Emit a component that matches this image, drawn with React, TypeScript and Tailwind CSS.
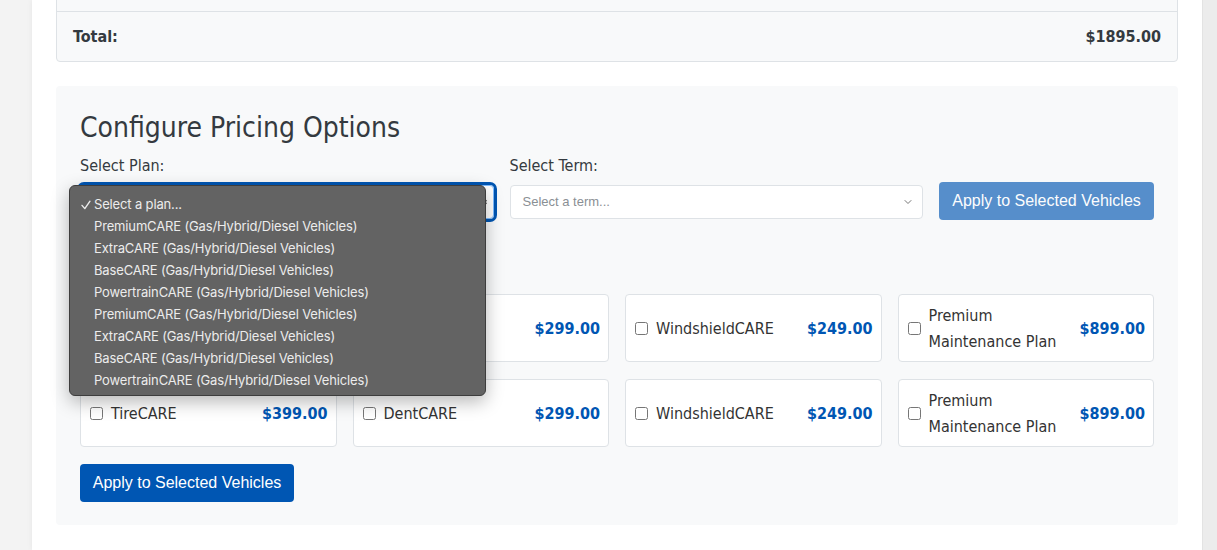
import { ChevronDown, ChevronsUpDown } from 'lucide-react';

const products = [
  { name: 'TireCARE', price: '$399.00' },
  { name: 'DentCARE', price: '$299.00' },
  { name: 'WindshieldCARE', price: '$249.00' },
  { name: 'Premium Maintenance Plan', price: '$899.00' },
];

const planOptions = [
  'PremiumCARE (Gas/Hybrid/Diesel Vehicles)',
  'ExtraCARE (Gas/Hybrid/Diesel Vehicles)',
  'BaseCARE (Gas/Hybrid/Diesel Vehicles)',
  'PowertrainCARE (Gas/Hybrid/Diesel Vehicles)',
  'PremiumCARE (Gas/Hybrid/Diesel Vehicles)',
  'ExtraCARE (Gas/Hybrid/Diesel Vehicles)',
  'BaseCARE (Gas/Hybrid/Diesel Vehicles)',
  'PowertrainCARE (Gas/Hybrid/Diesel Vehicles)',
];

const bodyFont = "font-['DejaVu_Sans_Condensed','Liberation_Sans',sans-serif]";

export default function App() {
  return (
    <div className={`flex h-[550px] overflow-hidden bg-[#f3f3f3] text-[#333] ${bodyFont}`}>
      <div className="w-8 shrink-0" />
      <div className="w-[1170px] shrink-0 bg-white px-6 shadow-[0_0_6px_rgba(0,0,0,0.06)]">
        {/* Summary table (scrolled, only the total row shows) */}
        <div className="-mt-[40px] rounded border border-[#dee2e6] bg-[#f8f9fa]">
          <div className="h-[51px] border-b border-[#dee2e6]" />
          <div className="flex h-[49px] items-center justify-between px-4 text-base font-bold text-[#343a40]">
            <span>Total:</span>
            <span>$1895.00</span>
          </div>
        </div>

        {/* Configure pricing */}
        <div className="mt-6 rounded bg-[#f8f9fa] px-6 pt-[25px] pb-[23px]">
          <h3 className="text-[28px] leading-[1.2] text-[#343a40]">Configure Pricing Options</h3>
          <div className="mt-[9px] flex items-end gap-4">
            <div className="flex-1">
              <label className="block text-base leading-6 text-[#343a40]">Select Plan:</label>
              <div className="relative mt-[7px]">
                <div className="flex h-[34px] items-center justify-between rounded border border-[#80bdff] bg-white pl-3 pr-1 outline-[3px] outline-[#0056b3] outline-offset-0 outline">
                  <span className="font-['Liberation_Sans',sans-serif] text-[13px] text-[#333]">Select a plan...</span>
                  <ChevronsUpDown size={10} className="text-[#222]" strokeWidth={3} />
                </div>
                {/* open native menu */}
                <div className="absolute -left-[11px] top-0 z-10 w-[417px] rounded-md border border-[#3d3d3d] bg-[#636363] pt-[8px] pb-[3px] font-['Inter',sans-serif] text-[13px] tracking-[-0.15px] text-[#ececec] shadow-[0_6px_18px_rgba(0,0,0,0.28)]">
                  <div className="flex h-[22px] items-center pl-[11px]">
                    <svg width="10" height="10" viewBox="0 0 10 10" className="mr-[3px] shrink-0">
                      <path d="M1 5.4 L3.8 8.6 L9 1.2" fill="none" stroke="#ececec" strokeWidth="1.4" strokeLinecap="round" strokeLinejoin="round" />
                    </svg>
                    <span>Select a plan...</span>
                  </div>
                  {planOptions.map((o, i) => (
                    <div key={i} className="flex h-[22px] items-center pl-[24px]">
                      {o}
                    </div>
                  ))}
                </div>
              </div>
            </div>
            <div className="flex-1">
              <label className="block text-base leading-6 text-[#343a40]">Select Term:</label>
              <div className="mt-[7px] flex h-[34px] items-center justify-between rounded border border-[#dee2e6] bg-white pl-3 pr-2">
                <span className="font-['Liberation_Sans',sans-serif] text-[13px] text-[#8a8f94]">Select a term...</span>
                <ChevronDown size={12} className="text-[#777]" />
              </div>
            </div>
            <button className="mb-[-1px] h-[38px] w-[215px] rounded bg-[#0056b3] font-['Liberation_Sans',sans-serif] text-base text-white opacity-65">
              Apply to Selected Vehicles
            </button>
          </div>

          <div className="mt-[75px] grid grid-cols-4 gap-x-4 gap-y-[17px]">
            {[0, 1].map(r =>
              products.map(p => (
                <div
                  key={r + p.name}
                  className="flex h-[68px] items-center justify-between rounded border border-[#dee2e6] bg-white pl-[9px] pr-[8px] pt-[2px]"
                >
                  <div className="flex items-center gap-2">
                    <input type="checkbox" className="h-[13px] w-[13px] shrink-0" />
                    <span className="max-w-[140px] text-base leading-[26px] text-[#333]">{p.name}</span>
                  </div>
                  <span className="text-base font-bold text-[#0056b3]">{p.price}</span>
                </div>
              ))
            )}
          </div>

          <button className="mt-[17px] h-[38px] w-[214px] rounded bg-[#0056b3] font-['Liberation_Sans',sans-serif] text-base text-white">
            Apply to Selected Vehicles
          </button>
        </div>
      </div>
      <div className="flex-1 border-l border-[#e3e3e3] bg-[#ececec]" />
    </div>
  );
}
